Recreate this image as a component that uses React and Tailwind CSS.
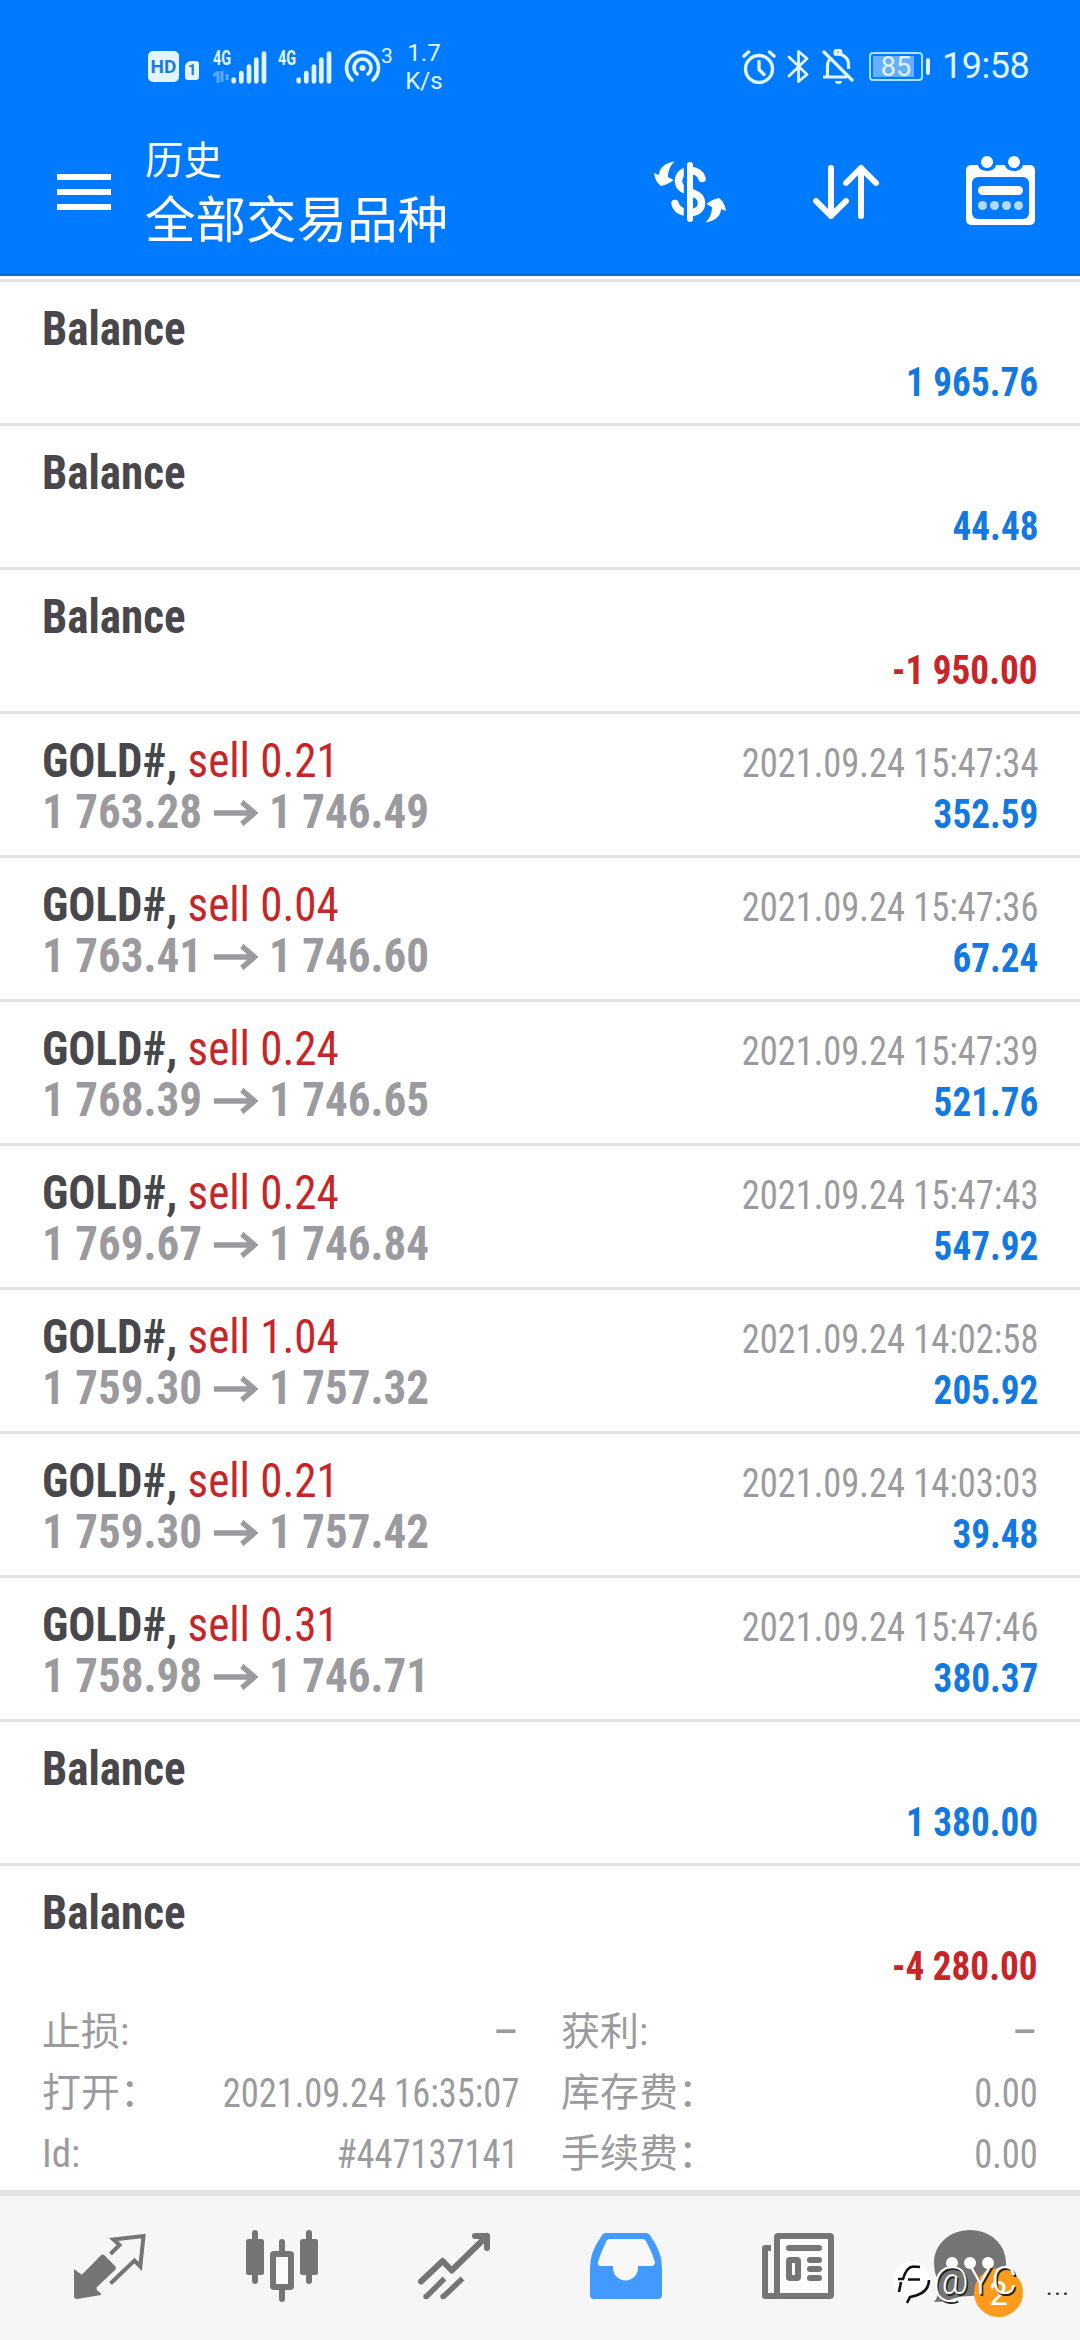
const rows = [
  { type: 'balance', profit: '1 965.76' },
  { type: 'balance', profit: '44.48' },
  { type: 'balance', profit: '-1 950.00' },
  { type: 'deal', volume: '0.21', open: '1 763.28', close: '1 746.49', time: '2021.09.24 15:47:34', profit: '352.59' },
  { type: 'deal', volume: '0.04', open: '1 763.41', close: '1 746.60', time: '2021.09.24 15:47:36', profit: '67.24' },
  { type: 'deal', volume: '0.24', open: '1 768.39', close: '1 746.65', time: '2021.09.24 15:47:39', profit: '521.76' },
  { type: 'deal', volume: '0.24', open: '1 769.67', close: '1 746.84', time: '2021.09.24 15:47:43', profit: '547.92' },
  { type: 'deal', volume: '1.04', open: '1 759.30', close: '1 757.32', time: '2021.09.24 14:02:58', profit: '205.92' },
  { type: 'deal', volume: '0.21', open: '1 759.30', close: '1 757.42', time: '2021.09.24 14:03:03', profit: '39.48' },
  { type: 'deal', volume: '0.31', open: '1 758.98', close: '1 746.71', time: '2021.09.24 15:47:46', profit: '380.37' },
  { type: 'balance', profit: '1 380.00' },
];

const SignalBars = () => (
  <svg className="w-9 h-[34px]" viewBox="0 0 36 34" stroke="#e2f4ff" strokeWidth="4.7" strokeLinecap="round">
    <path d="M2.7 29.5v1.8M10.3 23v8.3M18 16.5v14.8M25.3 9.5v21.8M33 3.5v27.8" />
  </svg>
);

const StatusBar = () => (
  <div className="h-[120px] flex items-center pt-[13px] pl-[148px] pr-[53px] text-[#e2f4ff]">
    <div className="w-[31px] h-[31px] rounded-[5px] bg-[#e2f4ff] text-[#1c7be0] text-[19px] leading-[31px] font-bold text-center">HD</div>
    <div className="ml-1.5 mt-[7px] w-[14px] h-[19px] rounded-[3px] rounded-tl-[6px] bg-[#e2f4ff] text-[#1c7be0] text-[15px] leading-[19px] font-bold text-center">1</div>
    <div className="ml-[14px] w-[18px] h-[34px]">
      <div className="w-6 origin-left scale-x-[0.72] text-[20px] leading-[17px] font-bold">4G</div>
      <svg className="mt-1 w-4 h-3 opacity-40" viewBox="0 0 16 12" fill="none" stroke="#e2f4ff" strokeWidth="3">
        <path d="M0 5l5-4v11M9 0v11M14 3v6" />
      </svg>
    </div>
    <SignalBars />
    <div className="ml-[11px] w-[18px] h-[34px]">
      <div className="w-6 origin-left scale-x-[0.72] text-[20px] leading-[17px] font-bold">4G</div>
    </div>
    <SignalBars />
    <svg className="ml-[11px] w-[38px] h-[34px]" viewBox="0 0 38 34" fill="none" stroke="#e2f4ff" strokeWidth="3.6" strokeLinecap="round">
      <path d="M9 30a16 16 0 1 1 21 0M14 24a8.5 8.5 0 1 1 11 0" />
      <circle cx="19.5" cy="18" r="3" fill="#e2f4ff" stroke="none" />
    </svg>
    <div className="self-start mt-[31px] w-3 text-[21px] leading-[24px]">3</div>
    <div className="ml-[10px] w-[42px] text-center text-[24px] leading-[28px]">
      <div>1.7</div>
      <div>K/s</div>
    </div>

    <svg className="ml-auto w-[34px] h-[34px]" viewBox="0 0 34 34" fill="none" stroke="#e2f4ff" strokeWidth="3.4" strokeLinecap="round">
      <circle cx="17" cy="19" r="13.5" />
      <path d="M17 11.5v8l5 5M2 6l4.5-4M32 6l-4.5-4" />
    </svg>
    <svg className="ml-[11px] w-[23px] h-[35px]" viewBox="0 0 23 35" fill="none" stroke="#e2f4ff" strokeWidth="2.8" strokeLinejoin="round" strokeLinecap="round">
      <path d="M2 8l18 17.5-8.5 7V2.5l8.5 7L2 27" />
    </svg>
    <svg className="ml-3 w-8 h-[35px]" viewBox="0 0 32 35" fill="none" stroke="#e2f4ff" strokeWidth="3.2">
      <path d="M2 3l28 28" strokeLinecap="round" />
      <path d="M1 28h24M5.5 28V17c0-3 .8-5 2-6.5M12 6c1-1 2-1.2 3.5-1.2C22 5 26.5 10 26.5 15v5M13 4c0-4 6-4 6 0" />
      <path d="M13 32a3.5 3 0 0 0 7 0z" fill="#e2f4ff" stroke="none" />
    </svg>
    <div className="ml-[15px] relative w-[54px] h-[29px] rounded-[4px] border-2 border-[#a9e2ff] p-0.5">
      <div className="w-[41px] h-[21px] bg-[#66b0ff]" />
      <div className="absolute inset-0 text-center text-[27px] leading-[26px]">85</div>
    </div>
    <div className="ml-[3px] w-1 h-[17px] rounded-full bg-[#e2f4ff]" />
    <div className="ml-3 w-[85px] text-[36px] leading-[37px] tracking-[-0.5px] whitespace-nowrap">19:58</div>
  </div>
);

const Toolbar = () => (
  <div className="h-[153px] flex pl-[57px] pr-[42px]">
    <div className="mt-[54px] w-[54px] flex flex-col gap-[9px]">
      <div className="h-1.5 bg-white" />
      <div className="h-1.5 bg-white" />
      <div className="h-1.5 bg-white" />
    </div>
    <div className="ml-[34px] pt-[11px] text-white font-['Noto_Sans_CJK_SC',sans-serif]">
      <div className="text-[38.5px] leading-[52px]">历史</div>
      <div className="text-[50.5px] leading-[66px]">全部交易品种</div>
    </div>
    <div className="ml-auto mt-9 flex gap-[84px]">
      <svg className="w-[72px] h-[72px]" viewBox="0 0 72 72" fill="none">
        <path d="M48 22.5C46 16 41 14.5 36 14.5C29 14.5 24.5 19 24.5 25C24.5 39 47.5 33 47.5 47C47.5 54 42 56.5 36 56.5C28 56.5 22.5 54 21 47.5" stroke="#fff" strokeWidth="7.5" strokeLinecap="round" />
        <path d="M31.5 5v62" stroke="#007aff" strokeWidth="3.5" />
        <path d="M36 9v54" stroke="#fff" strokeWidth="6" strokeLinecap="round" />
        <path id="turn" d="M20.5 5.5C11 7 5 12 5 19L0 17C1 23 3 27 7 30C12 29 16 27 19.5 24L14 21C14 15 16 10 20.5 5.5Z" fill="#fff" />
        <use href="#turn" transform="rotate(180 36 36)" />
      </svg>
      <svg className="w-[72px] h-[72px]" viewBox="0 0 72 72" fill="none" stroke="#fff" strokeWidth="6" strokeLinecap="round" strokeLinejoin="round">
        <path d="M21 12v48M6 45l15 15l15-15M51 60V12M36 27l15-15l15 15" />
      </svg>
      <svg className="w-[72px] h-[72px]" viewBox="0 0 72 72" fill="#fff">
        <rect x="0" y="9" width="69" height="60" rx="5" />
        <rect x="6" y="21" width="57" height="42" rx="6" fill="#007aff" />
        <path d="M12 9a9 6 0 0 0 18 0V5H12zM39 9a9 6 0 0 0 18 0V5H39z" fill="#007aff" />
        <circle cx="21" cy="6" r="6" />
        <circle cx="48" cy="6" r="6" />
        <rect x="12" y="30" width="45" height="9" rx="4.5" />
        <g fill="#b3d9ff">
          <circle cx="16.5" cy="49.5" r="4.5" />
          <circle cx="28.5" cy="49.5" r="4.5" />
          <circle cx="40.5" cy="49.5" r="4.5" />
          <circle cx="52.5" cy="49.5" r="4.5" />
        </g>
      </svg>
    </div>
  </div>
);

const Profit = ({ value }) => (
  <div className={`font-bold origin-right scale-x-[0.93] ${value.startsWith('-') ? 'text-[#c92427]' : 'text-[#1279e2]'}`}>{value}</div>
);

const Row = ({ row }) => (
  <div className="h-[144px] border-b-[3px] border-[#e3e3e3] px-[42px] flex justify-between whitespace-nowrap">
    <div className="pt-[21px] text-[48px] leading-[51px] origin-left scale-x-[0.938]">
      {row.type === 'balance' ? (
        <div className="font-bold text-[#48484c]">Balance</div>
      ) : (
        <>
          <div>
            <span className="font-bold text-[#48484c]">GOLD#,</span>
            <span className="text-[#c62628]"> sell {row.volume}</span>
          </div>
          <div className="flex font-bold text-[#9b9b9f]">
            <span className="w-[183px]">{row.open}</span>
            <svg className="mt-[14px] w-[48px] h-[26px]" viewBox="0 0 48 26" fill="none" stroke="#9b9b9f" strokeWidth="5.5">
              <path d="M0 13h44M30 2l13.500 11l-13.500 11" />
            </svg>
            <span className="ml-[11px]">{row.close}</span>
          </div>
        </>
      )}
    </div>
    <div className="pt-6 text-[40px] leading-[51px] text-right">
      <div className="h-[51px] text-[#9b9b9f] origin-right scale-x-[0.912]">{row.time}</div>
      <Profit value={row.profit} />
    </div>
  </div>
);

const Detail = ({ label, value }) => (
  <div className="flex justify-between">
    <span className="text-[39px]">{label}</span>
    {value ? (
      <span className="origin-right scale-x-[0.912]">{value}</span>
    ) : (
      <span className="text-[46px]">–</span>
    )}
  </div>
);

// the last record is expanded and shows its details
const ExpandedRow = () => (
  <div className="h-[324px] px-[42px] whitespace-nowrap">
    <div className="h-[136px] flex justify-between">
      <div className="pt-[21px] text-[48px] leading-[51px] font-bold text-[#48484c] origin-left scale-x-[0.938]">Balance</div>
      <div className="pt-[75px] text-[40px] leading-[51px]">
        <Profit value="-4 280.00" />
      </div>
    </div>
    <div className="grid grid-cols-2 gap-x-[42px] text-[40px] leading-[61px] text-[#9b9b9f]">
      <Detail label="止损:" />
      <Detail label="获利:" />
      <Detail label="打开：" value="2021.09.24 16:35:07" />
      <Detail label="库存费：" value="0.00" />
      <Detail label="Id:" value="#447137141" />
      <Detail label="手续费：" value="0.00" />
    </div>
  </div>
);

const Tab = ({ children }) => (
  <div className="w-[172px] flex justify-center">
    <svg className="w-[72px] h-[72px] overflow-visible" viewBox="0 0 72 72" fill="none">
      {children}
    </svg>
  </div>
);

const TabBar = () => (
  <div className="relative h-[150px] border-t-[6px] border-[#e3e3e3] bg-[#f6f6f6] px-6 pt-[34px] flex">
    <Tab>
      <path d="M0 39l7.7 5.7L27 25.3q1.7-1.6 3.4 0L41 36q2 2 0 4L22.7 57.3V60l4.3 3.5V65L3 69q-3 0-3-3z" fill="#757575" />
      <path d="M36.5 24l9-9l-6-5.5l30-3.5l-3.2 30.5l-5.8-6L36.5 53.5" stroke="#757575" strokeWidth="4" />
    </Tab>
    <Tab>
      <path d="M9 3v48M63 3v48M36 12v10M36 59v10" stroke="#757575" strokeWidth="6" strokeLinecap="round" />
      <rect x="0" y="9" width="18" height="36" rx="2.5" fill="#757575" />
      <rect x="54" y="9" width="18" height="36" rx="2.5" fill="#757575" />
      <rect x="27" y="24" width="18" height="33" rx="1" stroke="#757575" strokeWidth="6" fill="#fbfbfb" />
    </Tab>
    <Tab>
      <path d="M3 51.5L24.7 31l9 9.500L69 6M57 6h12v12" stroke="#757575" strokeWidth="6" strokeLinecap="round" strokeLinejoin="round" />
      <path d="M8 67l18.5-18.5M25 67l19.5-18.5" stroke="#757575" strokeWidth="5.5" />
      <circle cx="8" cy="66.5" r="2.7" fill="#757575" />
      <circle cx="25" cy="66.5" r="2.7" fill="#757575" />
    </Tab>
    <Tab>
      <path d="M16 3h40q3 0 4.500 3Q72 22 72 37v28q0 4-4 4H4q-4 0-4-4V37Q0 22 11.500 6Q13 3 16 3z" fill="#429aff" />
      <path d="M20 9h32q3 0 4.500 3q5 9 8.500 20q0 4-4 4H48v2a12 12 0 0 1-25 0v-2H11q-4 0-3-4q3-10 8-20q1-3 4-3z" fill="#f8f8f8" />
    </Tab>
    <Tab>
      <path d="M9 18H3v48h12" stroke="#757575" strokeWidth="6" strokeLinejoin="round" />
      <rect x="15" y="6" width="54" height="60" rx="1" stroke="#757575" strokeWidth="6" fill="#fbfbfb" />
      <path d="M27 18h30M48 30h9M48 39h9M48 48h9" stroke="#757575" strokeWidth="6" strokeLinecap="round" />
      <rect x="27" y="30" width="9" height="18" rx="1" stroke="#757575" strokeWidth="6" fill="#fff" />
    </Tab>
    <Tab>
      <path d="M36 0C56 0 72 14 72 33S56 66 36 66Q27 66 21 68Q12 72 0 72Q6 65 5 52Q0 44 0 33C0 14 16 0 36 0z" fill="#757575" />
      <circle cx="18" cy="33" r="6" fill="#fff" />
      <circle cx="36" cy="33" r="6" fill="#fff" />
      <circle cx="54" cy="33" r="6" fill="#fff" />
      <circle cx="64.5" cy="62.5" r="24.5" fill="#ff9b1c" />
      <text x="64.5" y="75" textAnchor="middle" fontSize="33" fill="#fff">2</text>
    </Tab>

    {/* watermark */}
    <div className="absolute left-[893px] top-[60px] flex items-center">
      <svg className="w-10 h-[50px]" viewBox="0 0 40 50" fill="none">
        <circle cx="19" cy="24" r="18.5" fill="#fff" />
        <path d="M5 23h5C12 16 15 11 20 10.500q4 0 7 .5M8 26L6 36M15 23.500h12M36 24C36 33 29 39 17 41L14 47" stroke="#111" strokeWidth="2.600" />
      </svg>
      <span className="text-[39px] leading-[50px] font-light text-white [text-shadow:1.5px_1.5px_0_#222]">@YC</span>
      <span className="ml-[27px] text-[34px] leading-[50px] font-light text-white [text-shadow:1.5px_1.5px_0_#222]">...</span>
    </div>
  </div>
);

const App = () => {
  return (
    <div className="w-[1080px] h-[2340px] overflow-hidden bg-white font-[Roboto,'Noto_Sans_CJK_SC',sans-serif]">
      <div className="h-[276px] bg-[#007aff] border-b-[3px] border-[#0f68cc]">
        <StatusBar />
        <Toolbar />
      </div>
      <div className="mt-[3px] border-t-[3px] border-[#e3e3e3] font-['Roboto_Condensed',Roboto,'Noto_Sans_CJK_SC',sans-serif] [font-stretch:75%]">
        {rows.map((row, i) => (
          <Row key={i} row={row} />
        ))}
        <ExpandedRow />
      </div>
      <TabBar />
    </div>
  );
};

export default App;
